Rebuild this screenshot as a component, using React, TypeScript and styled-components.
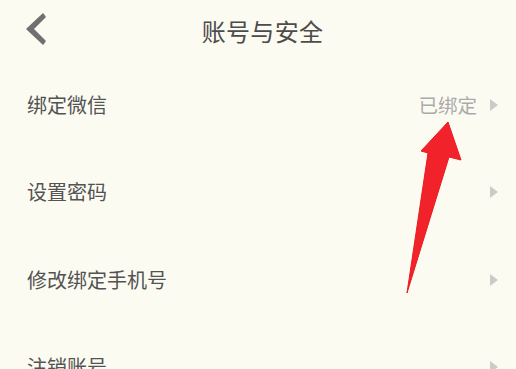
import React from "react";
import styled, { createGlobalStyle } from "styled-components";

const Global = createGlobalStyle`
  html, body { margin: 0; padding: 0; background: #fcfbf2; }
  body { font-family: "Noto Sans CJK SC", "Noto Sans", sans-serif; overflow: hidden; }
`;

const Page = styled.div`
  position: relative;
  width: 516px;
  height: 369px;
  overflow: hidden;
  background: #fcfbf2;
`;

const Header = styled.header`
  height: 61px;
  display: flex;
  align-items: center;
  justify-content: center;
  position: relative;
`;

const BackButton = styled.div`
  position: absolute;
  left: 24px;
  top: 11px;
  width: 26px;
  height: 36px;
  display: flex;
  align-items: center;
  justify-content: center;
  filter: blur(0.5px);
`;

const Title = styled.h1`
  margin: 0 0 0 9px;
  font-size: 24px;
  font-weight: 400;
  color: #4c4c4c;
  line-height: 1;
  letter-spacing: 0.3px;
`;

const List = styled.div`
  display: flex;
  flex-direction: column;
`;

const Row = styled.div`
  height: 87.5px;
  display: flex;
  align-items: center;
  justify-content: space-between;
  padding: 0 18px 0 27px;
  box-sizing: border-box;
`;

const Label = styled.span`
  font-size: 20px;
  color: #535353;
  line-height: 1;
`;

const Right = styled.div`
  display: flex;
  align-items: center;
  gap: 13px;
`;

const Value = styled.span`
  font-size: 19.5px;
  color: #ababab;
  line-height: 1;
`;

const Caret = styled.span`
  width: 0;
  height: 0;
  border-top: 6.5px solid transparent;
  border-bottom: 6.5px solid transparent;
  border-left: 8px solid #cbcbc8;
`;

const Overlay = styled.svg`
  position: absolute;
  left: 0;
  top: 0;
  pointer-events: none;
`;

const rows: { label: string; value?: string }[] = [
  { label: "绑定微信", value: "已绑定" },
  { label: "设置密码" },
  { label: "修改绑定手机号" },
  { label: "注销账号" },
];

export default function App() {
  return (
    <Page>
      <Global />
      <Header>
        <BackButton>
          <svg width="26" height="36" viewBox="0 0 26 36">
            <polygon
              points="19,3 21,6 9,18 21,30 19,33 3,18"
              fill="#707070"
              stroke="#707070"
              strokeWidth="1.5"
              strokeLinejoin="round"
            />
          </svg>
        </BackButton>
        <Title>账号与安全</Title>
      </Header>
      <List>
        {rows.map((r) => (
          <Row key={r.label}>
            <Label>{r.label}</Label>
            <Right>
              {r.value && <Value>{r.value}</Value>}
              <Caret />
            </Right>
          </Row>
        ))}
      </List>
      <Overlay width="516" height="369" viewBox="0 0 516 369">
        <polygon
          points="448,122 461,160 449,157 407,293 428,153 421,151"
          fill="#f2222a"
          stroke="#e81c24"
          strokeWidth="1"
          strokeLinejoin="round"
        />
      </Overlay>
    </Page>
  );
}
